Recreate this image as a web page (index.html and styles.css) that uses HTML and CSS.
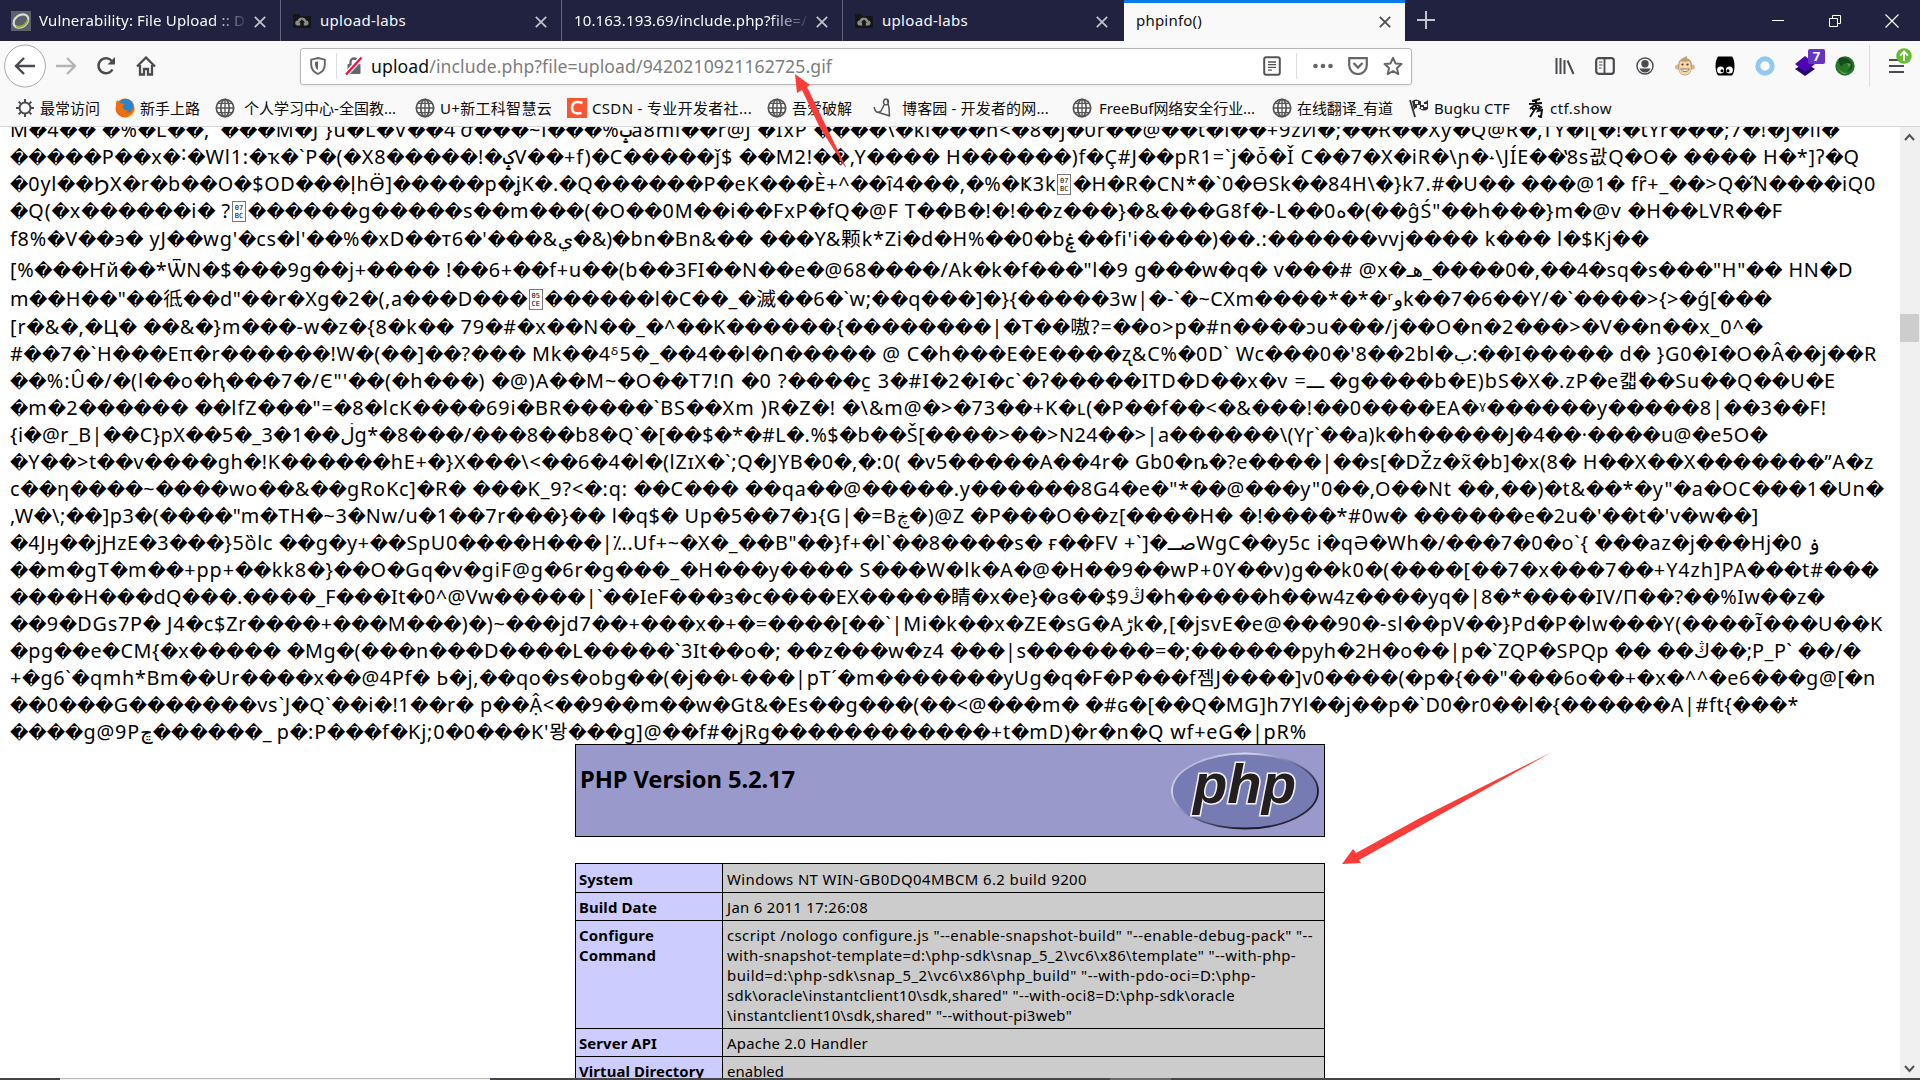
FILE: index.html
```html
<!DOCTYPE html>
<html lang="zh-CN">
<head>
<meta charset="utf-8">
<title>phpinfo()</title>
<link rel="stylesheet" href="styles.css">
</head>
<body>
<svg class="defs" width="0" height="0">
  <symbol id="globe" viewBox="0 0 20 20"><g fill="none" stroke="#555" stroke-width="1.7"><circle cx="10" cy="10" r="8.7"/><ellipse cx="10" cy="10" rx="4.2" ry="8.7"/><path d="M10 1v18M1.5 10h17M3 5.4h14M3 14.6h14" stroke-width="1.3"/></g></symbol>
  <symbol id="x" viewBox="0 0 12 12"><path d="M.8.8l10.4 10.4M11.2.8L.8 11.2" stroke="currentColor" stroke-width="1.7" fill="none"/></symbol>
  <symbol id="folder" viewBox="0 0 20 16"><path d="M1 2q0-1 1-1h5l2 2h9q1 0 1 1v10q0 1-1 1H2q-1 0-1-1z" fill="#151515"/><path d="M5 12.500a2.500 2.500 0 0 1 .6-4.900 4.500 4.500 0 0 1 8.600 0 2.500 2.500 0 0 1 .6 4.900h-3V9.500h1.300L10 6.500 6.900 9.500h1.300v3z" fill="#8b8b8b"/></symbol>
</svg>

<header class="tabs">
  <div class="tab">
    <svg class="fav" width="20" height="20" viewBox="0 0 20 20"><rect width="20" height="20" fill="#5b616a"/><ellipse cx="10" cy="10" rx="8" ry="6" fill="none" stroke="#d9dcd5" stroke-width="2.200" transform="rotate(-35 10 10)"/><path d="M5 15q7 3 12-6" fill="none" stroke="#90ad34" stroke-width="2"/></svg>
    <span class="label fade" data-width="206">Vulnerability: File Upload :: D</span>
    <svg class="close" width="12" height="12"><use href="#x"/></svg>
  </div>
  <div class="tab"><svg class="fav" width="20" height="16"><use href="#folder"/></svg><span class="label" data-width="86">upload-labs</span><svg class="close" width="12" height="12"><use href="#x"/></svg></div>
  <div class="tab"><span class="label fade" data-width="233">10.163.193.69/include.php?file=/</span><svg class="close" width="12" height="12"><use href="#x"/></svg></div>
  <div class="tab"><svg class="fav" width="20" height="16"><use href="#folder"/></svg><span class="label" data-width="86">upload-labs</span><svg class="close" width="12" height="12"><use href="#x"/></svg></div>
  <div class="tab active"><span class="label" data-width="66">phpinfo()</span><svg class="close" width="12" height="12"><use href="#x"/></svg></div>
  <svg class="plus" width="18" height="18" viewBox="0 0 18 18"><path d="M9 0v18M0 9h18" stroke="#c3c4cd" stroke-width="2"/></svg>
  <div class="winbtns">
    <svg width="14" height="14" viewBox="0 0 14 14"><path d="M1 6.500h12" stroke="#fff"/></svg>
    <svg width="14" height="14" viewBox="0 0 14 14"><path d="M1.500 4.500h8v8h-8zM4.500 4.500v-3h8v8h-3" fill="none" stroke="#fff"/></svg>
    <svg width="14" height="14" viewBox="0 0 14 14"><path d="M.5.5l13 13M13.500.5l-13 13" stroke="#fff" stroke-width="1.200"/></svg>
  </div>
</header>

<nav class="toolbar">
  <div class="navbtns">
    <svg width="42" height="44" viewBox="0 0 42 44"><ellipse cx="21" cy="22" rx="20.400" ry="21" fill="#fff" stroke="#aaa"/><path d="M12 22h19M20 14l-8 8 8 8" fill="none" stroke="#4a4a4f" stroke-width="2.400"/></svg>
    <svg width="20" height="20" viewBox="0 0 20 20"><path d="M0 10h18M11 2l8 8-8 8" fill="none" stroke="#b5b5b7" stroke-width="2.400"/></svg>
    <svg width="20" height="20" viewBox="0 0 20 20"><path d="M16.500 13.500A7.500 7.500 0 1 1 16.500 6" fill="none" stroke="#4a4a4f" stroke-width="2.400"/><path d="M19 1v7.500h-7.500z" fill="#4a4a4f"/></svg>
    <svg width="20" height="20" viewBox="0 0 20 20"><path d="M1 10.500L10 1.500l9 9M4 9v9.500h4V13h4v5.500h4V9" fill="none" stroke="#4a4a4f" stroke-width="2.300"/></svg>
  </div>
  <div class="url">
    <svg width="16" height="18" viewBox="0 0 16 18"><path d="M8 1l6.800 1.700v5q0 6-6.800 9.300Q1.200 13.700 1.200 7.700v-5z" fill="none" stroke="#666" stroke-width="1.900"/><path d="M8 4.300v9Q5 11 5 7.700V5z" fill="#666"/></svg>
    <i class="sep"></i>
    <svg width="18" height="20" viewBox="0 0 18 20"><path d="M5.500 9V6a3.500 3.500 0 0 1 7 0v3" fill="none" stroke="#666" stroke-width="2.300"/><rect x="2.500" y="8" width="13" height="10" rx="1" fill="#666"/><path d="M1.500 18L16 2" stroke="#fff" stroke-width="5"/><path d="M1 18.500L16.500 1.500" stroke="#ff0a3c" stroke-width="2.300"/></svg>
    <span class="addr" data-width="461"><b>upload</b>/include.php?file=upload/9420210921162725.gif</span>
    <div class="urlactions">
      <svg width="18" height="20" viewBox="0 0 18 20"><rect x="1.200" y="1.200" width="15.600" height="17.600" rx="2" fill="none" stroke="#555" stroke-width="2"/><path d="M5 6h8M5 8.700h8M5 11.400h8M5 14.100h4" stroke="#555" stroke-width="1.300"/></svg>
      <i class="sep"></i>
      <svg width="20" height="6" viewBox="0 0 20 6"><g fill="#666"><circle cx="2.500" cy="3" r="2.300"/><circle cx="10" cy="3" r="2.300"/><circle cx="17.500" cy="3" r="2.300"/></g></svg>
      <svg width="20" height="18" viewBox="0 0 20 18"><path d="M1.200 1.200h17.600v7a8.800 8.800 0 0 1-17.600 0z" fill="none" stroke="#666" stroke-width="2.200"/><path d="M5.500 6l4.500 4.500L14.500 6" fill="none" stroke="#666" stroke-width="2.300"/></svg>
      <svg width="20" height="20" viewBox="0 0 20 20"><path d="M10 1.800l2.500 5.600 6 .7-4.500 4 1.300 6-5.300-3.100-5.300 3.100 1.300-6-4.500-4 6-.7z" fill="none" stroke="#666" stroke-width="2" stroke-linejoin="round"/></svg>
    </div>
  </div>
  <div class="tools">
    <svg width="20" height="20" viewBox="0 0 20 20"><path d="M1.500 2v16M5.500 2v16M9.500 4v14M12.500 4.500L18.500 18" stroke="#4a4a4f" stroke-width="2" fill="none"/></svg>
    <svg width="20" height="20" viewBox="0 0 20 20"><rect x="1.200" y="2.200" width="17.600" height="15.600" rx="2.500" fill="none" stroke="#4a4a4f" stroke-width="2.200"/><path d="M9.500 2v16" stroke="#4a4a4f" stroke-width="1.800"/><path d="M4 6h3.500M4 9h3.500M4 12h2.500" stroke="#4a4a4f" stroke-width="1.200"/></svg>
    <svg width="20" height="20" viewBox="0 0 20 20"><circle cx="10" cy="10" r="8" fill="none" stroke="#4a4a4f" stroke-width="1.400"/><circle cx="10" cy="7.700" r="3.700" fill="#4a4a4f"/><path d="M4.500 12.500q5.500 0 5.500 0t5.500 0q-1.500 4-5.500 4t-5.500-4" fill="#4a4a4f"/></svg>
    <svg width="20" height="20" viewBox="0 0 20 20"><circle cx="2.600" cy="11" r="2.500" fill="#d9b58c"/><circle cx="17.400" cy="11" r="2.500" fill="#d9b58c"/><path d="M10 1q1-1 2.500-.5l-1 1.500Q17 3 17 10q0 9-7 9.500Q3 19 3 10q0-6.500 7-9z" fill="#c29a74"/><path d="M10 6Q4 3.500 4.500 9q-2 9.500 5.500 9.800Q17.500 18.500 15.500 9 16 3.500 10 6" fill="#f6d8ae"/><circle cx="7.500" cy="8.500" r="1.100" fill="#4b392d"/><circle cx="12.500" cy="8.500" r="1.100" fill="#4b392d"/><path d="M5.500 13q4.500 5.500 9 0z" fill="#fff" stroke="#775b42" stroke-width=".8"/></svg>
    <svg width="20" height="20" viewBox="0 0 20 20"><path d="M3 .5h14q2.500 3 2.500 9.500t-2.500 9.500H3Q.5 16 .5 10T3 .5" fill="#000"/><circle cx="5.600" cy="14" r="3.500" fill="#fff"/><circle cx="14.400" cy="14" r="3.500" fill="#fff"/><circle cx="7" cy="14.700" r="1.500"/><circle cx="13" cy="14.700" r="1.500"/></svg>
    <svg width="20" height="20" viewBox="0 0 20 20"><circle cx="10" cy="10" r="7.200" fill="#fff" stroke="#91c9f1" stroke-width="5"/></svg>
    <div class="stack"><svg width="20" height="20" viewBox="0 0 20 20"><path d="M0 13l10-6 10 6-10 7z" fill="#260770"/><path d="M0 8l10-8 10 8-10 8z" fill="#4b06b0"/></svg><span class="count">7</span></div>
    <svg width="20" height="20" viewBox="0 0 20 20"><circle cx="10" cy="10" r="9.700" fill="#27742b"/><path d="M4 2q8-2 12 4t-4 10q7-7 0-9-5 0-5 4-4-3-3-9" fill="#164c1d"/><path d="M2 8q2 9 11 9-8 4-11-9M12 7l4 1-2 3" fill="#57a83f"/></svg>
    <i class="toolsep"></i>
    <div class="menu"><svg width="16" height="18" viewBox="0 0 16 18"><path d="M0 3h15M0 9h15M0 15h15" stroke="#4a4a4f" stroke-width="2.200"/></svg><svg class="update" width="16" height="16" viewBox="0 0 16 16"><circle cx="8" cy="8" r="7.800" fill="#65bc31"/><path d="M8 13V4M4.200 7.500L8 3.700l3.800 3.800" fill="none" stroke="#fff" stroke-width="1.900"/></svg></div>
  </div>
</nav>

<div class="bookmarks">
  <a><svg width="20" height="20" viewBox="0 0 20 20"><circle cx="10" cy="10" r="5.500" fill="none" stroke="#4a4a4f" stroke-width="2"/><path d="M10 1v4M10 15v4M1 10h4M15 10h4M3.600 3.600l2.800 2.800M13.600 13.600l2.800 2.800M16.400 3.600l-2.800 2.800M6.400 13.600l-2.800 2.800" stroke="#4a4a4f" stroke-width="2"/></svg><span data-width="60">最常访问</span></a>
  <a><svg width="20" height="20" viewBox="0 0 20 20"><circle cx="10" cy="10" r="9.500" fill="#e8630c"/><circle cx="11" cy="8" r="7" fill="#2585cf"/><path d="M1 5q-1 10 7 13 8 2 11-6-3 4-8 2 2-1 3-2-5 1-6-2-1-3 2-3-2-2-5-2L2 2z" fill="#ee7014"/><path d="M18 5q4 10-6 14 6 0 8-7z" fill="#ffc32b"/></svg><span data-width="60">新手上路</span></a>
  <a class="wide"><svg width="20" height="20"><use href="#globe"/></svg><span data-width="152">个人学习中心-全国教...</span></a>
  <a><svg width="20" height="20"><use href="#globe"/></svg><span data-width="112">U+新工科智慧云</span></a>
  <a><svg width="20" height="20" viewBox="0 0 20 20"><rect width="20" height="20" fill="#fc5531"/><path d="M15.500 5q-9-3.500-10.500 4-.5 8 9.500 6" fill="none" stroke="#fff" stroke-width="2.500"/></svg><span data-width="160">CSDN - 专业开发者社...</span></a>
  <a><svg width="20" height="20"><use href="#globe"/></svg><span data-width="60">吾爱破解</span></a>
  <a class="wide"><svg width="20" height="20" viewBox="0 0 20 20"><path d="M1 9q2 8 7 4l3-6M15.500 3q-1-3-4-1.500-2 3 0 5 3 1 4-2 0-2-1-2 2 7 2 16M4 14l13 4" fill="none" stroke="#555" stroke-width="1.500"/></svg><span data-width="147">博客园 - 开发者的网...</span></a>
  <a class="mid"><svg width="20" height="20"><use href="#globe"/></svg><span data-width="156">FreeBuf网络安全行业...</span></a>
  <a><svg width="20" height="20"><use href="#globe"/></svg><span data-width="96">在线翻译_有道</span></a>
  <a><svg width="20" height="20" viewBox="0 0 20 20"><path d="M1 2l5 17" stroke="#333" stroke-width="1.800"/><path d="M3 3q4-3 8 0t8-1v9q-4 3-8 0t-6 1z" fill="#333"/><path d="M6 3h3v3H6zM12 4h3v3h-3zM8 7h3v3H8zM15 6h3v3h-3zM12 9h2v2h-2z" fill="#f9f9f9"/></svg><span data-width="76">Bugku CTF</span></a>
  <a class="slim"><svg width="16" height="20" viewBox="0 0 16 20"><path d="M12 1L4 3M1 6l13-1M8 2v9M8 6l-6 5M8 6l6 4M4 11l8-1-2 3 4-1-1 7-3-1M7 11l-5 8" fill="none" stroke="#111" stroke-width="1.900"/></svg><span data-width="62">ctf.show</span></a>
</div>

<main class="view">
  <div class="page">
    <div class="dump">
<p data-width="1830">M�4�� �%�L��,˙ ���M�J }u�L�V��4ˈժ���~l���%ݒa8ml��r@J �IxP ����\�kl���h&lt;�8�j�0r��@��t�l��+9zͶ�;��Ɍ��Xƴ�Q@R�,TY�l[�!�tYr���;7�!�j�ıı�</p>
<p data-width="1850">�����P��x�˸�Wl1:�ҡ�`P�(�X8�����!�ݤV��+f)�C�����ǰ$ ��M2!��,Y���� H������)f�Ç#J��pR1=`j�ȱ�Ǐ C��7�X�iR�\ɲ�˔\JÍE��̔8s괎Q�O� ���� H�*]ʔ�Q</p>
<p data-width="1866">�0yl��ϦX�r�b��O�$OD���ḷhӪ]�����p�ʝK�.�Q������P�eK���È+^��ȋ4���,�%�Ҝ3k<i class="hex">07<br>BC</i>�H�R�CN*�`0�ӨSk��84H\�}k7.#�U�� ���@1� fȓ+_��&gt;Q�̋N����iQ0</p>
<p data-width="1773">�Q(�x������i� ?<i class="hex">07<br>BC</i>������g�����s��m���(�O��0M��i��FxP�fQ�@F T��B�!�!��z���}�&amp;���G8f�-L��0ه�(��ĝŚ"��h���}m�@v �H��LVR��F</p>
<p data-width="1639" class="r5">f8%�V��э� yJ��wg'�cs�l'��%�xD��т6�'���&amp;ي�&amp;)�bn�Bn&amp;�� ���Y&amp;颗k*Zi�d�H%��0�bۼ��fi'i����)��.:������vvj���� k��� l�$Kj��</p>
<p data-width="1843" class="r6">[%���Ҥй��*ѾN�$���9g��j+���� !��6+��f+ս��(b��3FI��N��e�@68����/Ak�k�f���"l�9 g���w�q� v���# @x�ـه_����0�,��4�sq�s���"H"�� HN�D</p>
<p data-width="1762" class="r7">m��H��"��彽��d"��r�Xg�2�(,a���D���<i class="hex">05<br>CE</i>������l�C��_�滅��6�`w;��q���]�}{�����3w|�-`�~CXm����*�*�ʳوk��7�6��Y/�`����&gt;{&gt;�ǵ[���</p>
<p data-width="1753">[r�&amp;�,�Ц� ��&amp;�}m���-w�z�{8�k�� 79�#�x��N��_�^��K������{��������|�T��嗷?=��o&gt;p�#n����ɔu���/j��O�n�2���&gt;�V��n��x_0^�</p>
<p data-width="1867">#��7�`H���Eπ�r������!W�(��]��?��� Mk��4ᵟ5�_��4��l�Ո����� @ C�h���E�E����ʐ&amp;C%�0D` Wc���0�'8��2bl�ب:��I����� d� }G0�I�O�Â��j��R</p>
<p data-width="1826">��%:Û�/�(l��o�ԧ���7�/Є"'��(�h���) �@)A��M~�O��T7!Ո �0 ?����c̱ 3�#I�2�I�c`�ʔ�����ITD�D��x�v =ـــ �g����b�E)bS�X�.zP�e캛��Su��Q��U�E</p>
<p data-width="1817">�m�2������ ��lfZ���"=�8�lcK����69i�BR�����`BS��Xm )R�Z�! �\&amp;m@�&gt;�73��+K�ʟ(�P��f��&lt;�&amp;���!��0����EA�ˠ������y�����8|��3��F!</p>
<p data-width="1758">{i�@r_B|��C}pX��5�_3�1��ڶg*�8���/���8��b8�Q`�[��$�*�#L�.%$�b��Š[����&gt;��&gt;N24��&gt;|a������\(Yɼ`��a)k�h�����J�4��·����u@�e5O�</p>
<p data-width="1864">�Y��&gt;t��v����gh�!K������hE+�}X���\&lt;��6�4�l�(lZɪX�`;Q�JYB�0�,�:0( �v5�����A��4r� Gb0�ȵ�?e����|��s[�DŽz�x̃�b]�x(8� H��X��X�������ˮA�z</p>
<p data-width="1874">c��η����~����wo��&amp;��gRoKc]�R� ���K_9?&lt;�:q: ��C��� ��qa��@�����.y������8G4�e�"*��@���y"0��,O��Nt ��,��)�t&amp;��*�y"�a�OC���1�Un�</p>
<p data-width="1749">,W�\;��]p3�(����"m�TH�~3�Nw/u�1��7r���}�� l�q$� Up�5��7�נ{G|�=Bڿ�)@Z �P���O��z[����H� �!����*#0w� ������e�2u�'��t�'v�w��]</p>
<p data-width="1810">�4Jӈ��jԨzE�3���}5ȍlc ��g�y+��SpU0����H���|⁒..Uf+~�X�_��B"��}f+�l`��8����s� ғ��FV +`]�ــصWgC��y5c i�qӘ�Wh�/���7�0�o`{ ���az�j���Hj�0 ۏ</p>
<p data-width="1869">��m�gT�m��+pp+��kk8�}��O�Gq�v�giF@g�6r�g���_�H���y���� S���W�lk�A�@�H��9��wP+0Y��v)g��k0�(����[��7�x���7��+Y4zh]PA���t#���</p>
<p data-width="1815">����H���dQ���.����_F���It�0^@Vw�����|`��IeF���з�c����EX�����睛�x�e}�ɞ��$9ڭ�h�����h��w4z����yq�|8�*����IV/П��?��%Iw��z�</p>
<p data-width="1873">��9�DGs7P� J4�c$Zr����+���M���)�)~���jd7��+���x�+�=����[��`|Mi�k��x�ZE�sG�Aڑk�,[�jsvE�e@���90�-sl��pV��}Pd�P�lw���Y(����Ĩ���U��K</p>
<p data-width="1851">�pg��e�CM{�x����� �Mg�(���n���D����L�����`3It��o�; ��z���w�z4 ���|s�������=�;������pyh�2H�o��|p�`ZQP�SPQp �� ��ڭ��;P_P` ��/�</p>
<p data-width="1866">+�g6`�qmh*Bm��Ur����x��@4Pf� Ь�j,��qo�s�obg��(�j��˪���|pT´�m�������yUg�q�F�P���f젬J����]v0����(�p�{��"���6o��+�x�^^�e6���g@[�n</p>
<p data-width="1789">��0���G�������vsְ`J�Q`��i�!1��r� p��Ậ&lt;��9��m��w�Gt&amp;�Es��g���(��&lt;@���m� �#ɢ�[��Q�MG]h7Yl��j��p�`D0�r0��l�{������A|#ft{���*</p>
<p data-width="1297">����g@9Pڇ������_ p�:P���f�Kj;0�0���K'뫙���g]@��f#�jRg������������+t�mD)�r�n�Q wf+eG�|pR%</p>
    </div>
    <section class="info">
      <div class="phphead">
        <h1 data-width="215">PHP Version 5.2.17</h1>
        <svg width="150" height="84" viewBox="0 0 150 84">
          <defs><linearGradient id="rim" x1="0" y1="0" x2="1" y2="1"><stop offset="0" stop-color="#8d8fc0"/><stop offset=".25" stop-color="#d8d8ee"/><stop offset=".5" stop-color="#66689a"/><stop offset=".75" stop-color="#1a1722"/><stop offset="1" stop-color="#3c3b58"/></linearGradient></defs>
          <ellipse cx="75" cy="42" rx="73" ry="37.500" fill="#777bb3" stroke="url(#rim)" stroke-width="1.800"/>
          <text class="phptext" x="23" y="54" textLength="103" lengthAdjust="spacingAndGlyphs">php</text>
        </svg>
      </div>
      <table>
        <tr class="first"><th><span data-width="54">System</span></th><td><span data-width="360">Windows NT WIN-GB0DQ04MBCM 6.2 build 9200</span></td></tr>
        <tr><th><span data-width="78">Build Date</span></th><td><span data-width="141">Jan 6 2011 17:26:08</span></td></tr>
        <tr><th><span data-width="75">Configure</span><br><span data-width="77">Command</span></th><td><span data-width="586">cscript /nologo configure.js "--enable-snapshot-build" "--enable-debug-pack" "--</span><br><span data-width="569">with-snapshot-template=d:\php-sdk\snap_5_2\vc6\x86\template" "--with-php-</span><br><span data-width="529">build=d:\php-sdk\snap_5_2\vc6\x86\php_build" "--with-pdo-oci=D:\php-</span><br><span data-width="508">sdk\oracle\instantclient10\sdk,shared" "--with-oci8=D:\php-sdk\oracle</span><br><span data-width="345">\instantclient10\sdk,shared" "--without-pi3web"</span></td></tr>
        <tr><th><span data-width="78">Server API</span></th><td><span data-width="141">Apache 2.0 Handler</span></td></tr>
        <tr><th><span data-width="125">Virtual Directory</span></th><td><span data-width="57">enabled</span></td></tr>
      </table>
    </section>
  </div>
  <div class="scroll">
    <svg width="20" height="20" viewBox="0 0 20 20"><path d="M5 13l4.500-5 4.500 5" fill="none" stroke="#505050" stroke-width="2"/></svg>
    <div class="thumb"></div>
    <svg width="20" height="20" viewBox="0 0 20 20"><path d="M5 8l4.500 5L14 8" fill="none" stroke="#505050" stroke-width="2"/></svg>
  </div>
</main>
<footer class="edge"><i class="e1"></i><i class="e2"></i></footer>

<svg class="arrows" width="1920" height="1080" viewBox="0 0 1920 1080"><path d="M795 74L810 85 807 87 827 128 846 167 845 167 820 128 802 90 797 93zM1342 864L1353 849 1356 853 1420 818 1552 752 1420 826 1359 860 1361 863z" fill="#fc3c38"/></svg>
<script src="fit.js"></script>
</body>
</html>
```
FILE: styles.css
```css
* { box-sizing: border-box; }
body { margin: 0; width: 1920px; height: 1080px; overflow: hidden; display: flex; flex-direction: column; background: #fff; color: #000; font-family: "Noto Sans", "Noto Sans CJK SC", "DejaVu Sans", sans-serif; }
svg { display: block; flex: none; }
.defs { position: absolute; }
[data-width] { white-space: nowrap; }

.tabs { height: 41px; flex: none; display: flex; align-items: center; background: #20223f; color: #f9f9fa; font: 15px "Noto Sans", sans-serif; }
.tab { width: 281px; height: 41px; padding: 0 14px 0 11px; display: flex; align-items: center; border-right: 1px solid #62647a; }
.tab .close { color: #c3c4cd; margin-left: auto; margin-top: 2px; }
.tab .fav { margin-right: 8px; }
.tab:not(:has(.fav)) { padding-left: 12px; }
.tab:nth-child(4) { border-right: 0; padding-right: 16px; }
.label { flex: none; margin-top: -1px; }
.fade { -webkit-mask-image: linear-gradient(90deg, #000 84%, transparent 102%); mask-image: linear-gradient(90deg, #000 84%, transparent 102%); }
.tab.active { width: 281px; background: #f9f9f9; color: #111; border-right: 0; border-top: 3px solid #0a7be8; padding-bottom: 3px; }
.tab.active .close { color: #4a4a4f; }
.plus { margin-left: 12px; margin-top: -1px; }
.winbtns { margin-left: auto; margin-right: 21px; display: flex; gap: 43px; }

.toolbar { height: 50px; flex: none; background: #f9f9f9; display: flex; align-items: center; padding-left: 4px; }
.navbtns { width: 296px; display: flex; align-items: center; }
.navbtns svg + svg { margin-left: 20px; }
.navbtns svg:nth-child(2) { margin-left: 10px; }
.url { width: 1112px; height: 37px; background: #fff; border: 1px solid #b8b8b8; border-radius: 3px; box-shadow: 0 1px 3px rgba(0,0,0,.08); display: flex; align-items: center; padding: 0 8px 0 9px; }
.sep { width: 1px; height: 26px; background: #ddd; margin: 0 8px 0 10px; }
.addr { margin-left: 8px; font-size: 17.600px; color: #7c7c7c; }
.addr b { color: #0c0c0d; font-weight: 400; }
.urlactions { margin-left: auto; display: flex; align-items: center; }
.urlactions .sep { margin: 0 16px 0 15px; }
.urlactions svg + svg { margin-left: 15px; }
.tools { margin-left: 143px; display: flex; align-items: center; gap: 20px; }
.stack, .menu { position: relative; }
.count { position: absolute; left: 13px; top: -7px; width: 17px; height: 15px; border-radius: 2px; background: #6733c4; color: #fff; font: bold 13px/15px "Noto Sans", sans-serif; text-align: center; }
.toolsep { width: 1px; height: 42px; background: #ddd; margin-left: -6px; }
.menu { margin-left: -1px; }
.update { position: absolute; left: 7px; top: -9px; }

.bookmarks { height: 36px; flex: none; background: #f9f9f9; border-bottom: 1px solid #d8d8d8; padding: 0 0 1px 15px; display: grid; grid-template-columns: 100px 100px 200px 152px 200px 106px 199px 200px 137px 119px 1fr; align-items: center; font: 15px "Noto Sans", "Noto Sans CJK SC", sans-serif; color: #0c0c0d; }
.bookmarks a { display: flex; align-items: center; gap: 5px; }
.bookmarks a span { margin-top: -1px; }
.bookmarks .wide { gap: 9px; }
.bookmarks .mid { gap: 7px; }
.bookmarks .slim { gap: 6px; }

.view { flex: 1; min-height: 0; display: flex; }
.page { flex: 1; min-width: 0; overflow: hidden; }
.dump { padding-left: 10px; margin-top: -11px; height: 628px; font-size: 19.800px; font-family: "Noto Sans", "DejaVu Sans", "Noto Sans CJK SC", "Noto Sans CJK KR", sans-serif; direction: ltr; }
.dump p { margin: 0; height: 27px; line-height: 27px; white-space: pre; unicode-bidi: bidi-override; width: max-content; }
.dump .r5 { height: 28px; line-height: 29px; }
.dump .r6 { height: 31px; line-height: 35px; }
.dump .r7 { height: 30px; line-height: 32px; }
.bad { font-family: "DejaVu Sans", sans-serif; font-size: 17.900px; letter-spacing: 0; }
.hex { display: inline-block; width: 14px; height: 21px; margin: 0 2px 0 1px; border: 1px solid #777; font: 7px/8px "DejaVu Sans Mono", monospace; letter-spacing: 0; padding-top: 2px; text-align: center; vertical-align: 0; }

.info { width: 750px; margin-left: 575px; font-size: 15px; }
.phphead { height: 93px; background: #9999cc; border: 1px solid #000; display: flex; justify-content: space-between; padding: 4px 4px 0 4px; }
.phphead h1 { margin: 14px 0 0; font-size: 23.800px; line-height: 32px; height: 32px; }
.phptext { font: italic bold 56px "Liberation Sans", sans-serif; fill: #231f20; stroke: #f2f2f6; stroke-width: 3px; paint-order: stroke; }
table { width: 750px; margin-top: 26px; border-collapse: collapse; table-layout: fixed; }
th, td { border: 1px solid #000; padding: 4px 3px 3px; line-height: 20px; vertical-align: top; text-align: left; font-size: 14.900px; }
th { width: 147px; background: #ccccff; padding-left: 3px; }
td { background: #cccccc; padding-left: 4px; }
.first th, .first td { padding-top: 5px; }

.scroll { width: 20px; background: #f0f0f0; display: flex; flex-direction: column; }
.thumb { height: 28px; margin: 167px 1px auto 0; background: #cdcdcd; }
.edge { height: 2px; flex: none; background: #46464a; display: flex; }
.e1 { margin-left: 60px; width: 430px; background: #f0f0f0; border-top: 1px solid #bbb; }
.e2 { margin-left: 620px; width: 61px; background: #6b6b6f; }
.arrows { position: absolute; left: 0; top: 0; }
```
FILE: fit.js
```js
// Give every undecodable-byte run its own font, then space the text to the declared width.
document.querySelectorAll('.dump p').forEach(function (p) {
  p.innerHTML = p.innerHTML.replace(/\uFFFD+/g, function (run) {
    return '<span class="bad">' + run + '</span>';
  });
});
document.querySelectorAll('[data-width]').forEach(function (el) {
  var count = el.textContent.replace(/\uFFFD/g, '').length;
  var spacing = 0;
  // Spacing switches ligatures off, so the first pass changes the measured width.
  for (var pass = 0; pass < 4; pass++) {
    var range = document.createRange();
    range.selectNodeContents(el);
    spacing += (Number(el.dataset.width) - range.getBoundingClientRect().width) / count;
    el.style.letterSpacing = spacing.toFixed(4) + 'px';
  }
});
```
